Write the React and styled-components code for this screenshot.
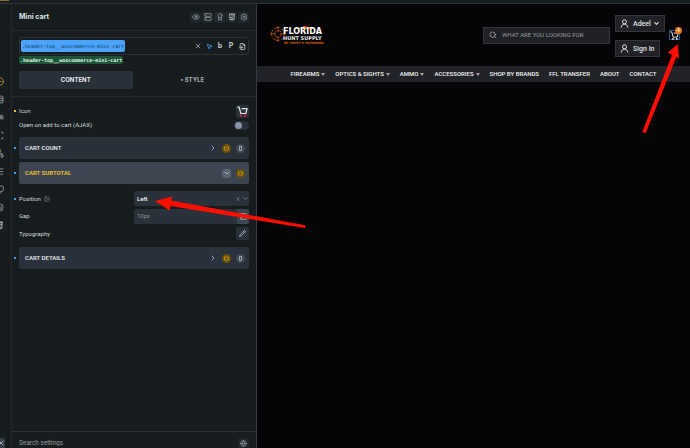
import React from "react";
import styled, { createGlobalStyle, css } from "styled-components";
import {
  Eye, Server, Award, Settings, X, MousePointer2, FileInput, ChevronRight, ChevronDown,
  Pencil, Monitor, Search, Globe, CirclePlus, Image, Table, CaseUpper, Network, List, Layers, Scan,
} from "lucide-react";
import { FaHtml5 } from "react-icons/fa";

const Global = createGlobalStyle`
  * { box-sizing: border-box; }
  body { margin: 0; background: #050507; font-family: Inter, sans-serif; }
  button, input, select { font: inherit; color: inherit; margin: 0; padding: 0; border: 0; background: none; }
  input, select { min-width: 0; outline: 0; }
  svg { display: block; flex: none; }
`;

const Page = styled.div`
  position: relative;
  display: flex;
  flex-direction: column;
  height: 100vh;
  overflow: hidden;
  color: #dfe3e6;
  font-size: 7px;
  line-height: 10px;
`;
const TopStrip = styled.div`
  flex: none;
  height: 4px;
  background: #181d1f;
  border-bottom: 1px solid #2c353c;
`;
const TopMark = styled.div`
  width: 9px;
  height: 1px;
  background: #8a701f;
`;
const Columns = styled.div`
  flex: 1;
  min-height: 0;
  display: flex;
`;

const Rail = styled.nav`
  flex: none;
  width: 12px;
  display: flex;
  flex-direction: column;
  justify-content: space-between;
  overflow: hidden;
  padding-top: 72px;
  background: #171c1e;
  border-right: 1px solid #22292d;
`;
const RailList = styled.div`
  display: flex;
  flex-direction: column;
  gap: 8px;
`;
const RailButton = styled.button`
  height: 10px;
  width: 4px;
  display: flex;
  justify-content: flex-end;
  align-items: center;
  overflow: hidden;
  color: ${(p) => (p.$active ? "#d9a925" : "#a4abb0")};
`;
const Collapse = styled.button`
  width: 5px;
  height: 10px;
  display: flex;
  justify-content: flex-end;
  align-items: center;
  overflow: hidden;
  background: #343e48;
  border-radius: 0 2px 0 0;
`;

const Panel = styled.aside`
  flex: none;
  width: 245px;
  display: flex;
  flex-direction: column;
  background: #171c1e;
  border-right: 1px solid #323b44;
`;
const PanelHead = styled.header`
  display: flex;
  align-items: center;
  justify-content: space-between;
  height: 27px;
  padding: 0 7px;
  border-bottom: 1px solid #252c31;
`;
const Title = styled.h1`
  margin: 0;
  font-size: 7px;
  line-height: 10px;
  font-weight: 700;
`;
const Tools = styled.div`
  display: flex;
  gap: 1px;
`;
const ToolButton = styled.button`
  display: grid;
  place-items: center;
  width: 11px;
  height: 11px;
  border-radius: 2px;
  background: #20272c;
  color: #a2a8ac;
`;
const ClassArea = styled.section`
  display: flex;
  flex-direction: column;
  align-items: stretch;
  padding: 6px 7px 7px;
  border-bottom: 1px solid #252c31;
`;
const ClassField = styled.div`
  display: flex;
  align-items: center;
  justify-content: space-between;
  height: 18px;
  padding: 0 1px;
  border: 1px solid #2a3239;
  border-radius: 3px;
`;
const ClassTag = styled.button`
  height: 12px;
  padding: 0 1px;
  border-radius: 2px;
  background: #4ba4fb;
  color: #12385f;
  font: 5px/12px "DejaVu Sans Mono", monospace;
`;
const Selector = styled.span`
  align-self: flex-start;
  margin-top: 1px;
  padding: 0 1px;
  border-radius: 2px;
  background: #1c5436;
  color: #e3f3e9;
  font: bold 5px/8px "DejaVu Sans Mono", monospace;
`;
const ClassTools = styled.div`
  display: flex;
  gap: 1px;
`;
const BareButton = styled.button`
  display: grid;
  place-items: center;
  width: 10px;
  height: 10px;
  font-size: 7px;
  line-height: 10px;
  font-weight: 700;
  color: ${(p) => (p.$blue ? "#4394df" : "#c3c7ca")};
`;
const Tabs = styled.div`
  display: flex;
  gap: 3px;
  margin-top: 7px;
`;
const Tab = styled.button`
  flex: 1;
  height: 18px;
  border-radius: 2px;
  font-size: 6px;
  font-weight: 700;
  background: ${(p) => (p.$active ? "#29313a" : "transparent")};
  color: ${(p) => (p.$active ? "#e8ebed" : "#a8aeb3")};
`;

const Controls = styled.section`
  flex: 1;
  display: flex;
  flex-direction: column;
  padding: 7px 7px 0 2px;
  font-family: Roboto, sans-serif;
`;
const Row = styled.div`
  display: flex;
  align-items: center;
  height: ${(p) => p.$h}px;
  margin-bottom: ${(p) => p.$gap || 0}px;
  font-size: 6px;
`;
const Dot = styled.span`
  flex: none;
  width: 2px;
  height: 2px;
  margin-right: 3px;
  background: ${(p) => p.$color || "transparent"};
`;
const Label = styled.label`
  flex: 1;
  display: flex;
  align-items: center;
  gap: 3px;
  color: #d3d7da;
`;
const SquareButton = styled.button`
  display: grid;
  place-items: center;
  width: 13px;
  height: 13px;
  border-radius: 2px;
  background: #29313a;
  color: #e9ecee;
`;
const Toggle = styled.input`
  appearance: none;
  width: 15px;
  height: 9px;
  border-radius: 5px;
  background: #29313a;
  &::before {
    content: "";
    display: block;
    width: 7px;
    height: 7px;
    margin: 1px;
    border-radius: 50%;
    background: #8794a6;
  }
  &:checked::before { margin-left: 7px; }
`;
const Group = styled.div`
  flex: 1;
  height: 22px;
  display: flex;
  align-items: center;
  gap: 5px;
  padding: 0 4px 0 6px;
  border-radius: 2px;
  background: ${(p) => (p.$open ? "#3d4650" : "#29313a")};
  color: ${(p) => (p.$open ? "#f2c13c" : "#e3e7ea")};
`;
const GroupName = styled.button`
  flex: 1;
  text-align: left;
  font-weight: 600;
`;
const Chevron = styled.button`
  display: grid;
  place-items: center;
  width: 9px;
  height: 9px;
  border-radius: 2px;
  color: #d5dade;
  ${(p) => p.$open && css`background: #566373;`}
`;
const Round = styled.button`
  display: grid;
  place-items: center;
  width: 9px;
  height: 9px;
  border-radius: 50%;
  background: ${(p) => (p.$gold ? "#6a500b" : "#414b56")};
  color: ${(p) => (p.$gold ? "#b58b22" : "#a3abb3")};
`;
const Field = styled.div`
  width: 115px;
  height: 15px;
  display: flex;
  align-items: center;
  overflow: hidden;
  border-radius: 2px;
  background: #29313a;
  padding-left: 3px;
`;
const Picker = styled.select`
  flex: 1;
  appearance: none;
  font-weight: 600;
  color: #eef0f2;
`;
const TextInput = styled.input`
  flex: 1;
  color: #8e969d;
`;
const FieldIcon = styled.button`
  width: 7px;
  color: #929aa1;
`;
const UnitButton = styled.button`
  display: grid;
  place-items: center;
  width: 12px;
  height: 15px;
  background: #3d4650;
  color: #cfd4d8;
`;
const PanelFoot = styled.footer`
  display: flex;
  align-items: center;
  height: 17px;
  padding: 6px 7px 0;
  border-top: 1px solid #2a3136;
`;
const SettingsSearch = styled.input`
  flex: 1;
  font-size: 6px;
  &::placeholder { color: #9da3a7; }
`;

const Site = styled.main`
  flex: 1;
  min-width: 0;
  font-family: Roboto, sans-serif;
`;
const SiteHead = styled.header`
  display: flex;
  align-items: center;
  height: 62px;
  padding: 0 10px 0 13px;
`;
const LogoLink = styled.a`
  margin-right: auto;
`;
const SearchBox = styled.label`
  display: flex;
  align-items: center;
  gap: 5px;
  width: 127px;
  height: 17px;
  padding: 0 5px;
  margin-right: 5px;
  border: 1px solid #34353b;
  background: #202126;
  color: #b5b6ba;
`;
const SearchInput = styled.input`
  flex: 1;
  font-size: 6px;
  &::placeholder { color: #9a9b9f; }
`;
const Accounts = styled.div`
  display: flex;
  flex-direction: column;
  align-items: flex-start;
  gap: 8px;
  width: 54px;
  padding-top: 2px;
`;
const Account = styled.button`
  display: flex;
  align-items: center;
  gap: ${(p) => (p.$wide ? 2 : 0)}px;
  height: 17px;
  padding: 0 4px;
  border: 1px solid #34353b;
  background: #202126;
  color: #e2e2e4;
  font: 500 7px/10px Roboto, sans-serif;
  & > svg:first-child { margin-right: ${(p) => (p.$wide ? 2 : 4)}px; }
`;
const CartButton = styled.button`
  position: relative;
  width: 11px;
  height: 10px;
  display: grid;
  place-items: center;
  border: 1px solid #1c5a8c;
  color: #eeeeee;
`;
const Badge = styled.span`
  position: absolute;
  right: -3px;
  top: -4px;
  width: 7px;
  height: 7px;
  border-radius: 50%;
  background: #f47416;
  color: #fff;
  font-size: 5px;
  line-height: 7px;
  text-align: center;
`;
const Menu = styled.nav`
  display: flex;
  justify-content: center;
  align-items: center;
  gap: 10px;
  height: 16px;
  background: #222328;
`;
const MenuLink = styled.a`
  display: flex;
  align-items: center;
  gap: 2px;
  color: #f4f4f6;
  font-size: 6px;
  font-weight: 500;
  text-decoration: none;
  white-space: nowrap;
`;
const Arrow = styled.svg`
  position: absolute;
  left: ${(p) => p.$x}px;
  top: ${(p) => p.$y}px;
  pointer-events: none;
`;

const Cart = ({ size, wheels }) => (
  <svg width={size} height={size} viewBox="0 0 12 12" fill="none" stroke="currentColor" strokeWidth="1.3">
    <path d="M0.5 1.2H2.3L4.2 8.2H9.6L11 2.8H5" strokeLinejoin="round" />
    <path d="M4 9.4V11.6M9 9.4V11.6" stroke={wheels} strokeWidth="2" />
  </svg>
);
const Card = () => (
  <svg width="5" height="5" viewBox="0 0 5 5" fill="none" stroke="currentColor">
    <path d="M.5 1H4.5V4H.5Z" />
  </svg>
);
const Sheet = () => (
  <svg width="5" height="5" viewBox="0 0 5 5" fill="none" stroke="currentColor">
    <path d="M1.5 .5H3.5V4.5H1.5Z" />
  </svg>
);
const Caret = () => (
  <svg width="4" height="3" viewBox="0 0 4 3"><path d="M0 0H4L2 3Z" fill="#a3a3a8" /></svg>
);
const Person = () => (
  <svg width="9" height="9" viewBox="0 0 9 9" fill="none" stroke="currentColor">
    <circle cx="4.5" cy="2.8" r="2" /><path d="M1.2 8.5C1.4 6.4 2.6 5.3 4.5 5.3S7.6 6.4 7.8 8.5" />
  </svg>
);

const Logo = () => (
  <svg width="56" height="22" viewBox="0 0 56 22" role="img" aria-label="Florida Hunt Supply">
    <g fill="none" stroke="#c65315" strokeWidth=".8">
      <circle cx="8" cy="10" r="6.5" strokeDasharray="7 1.5" />
      <circle cx="8" cy="10" r="3.5" strokeDasharray="4 1.2" />
      <path d="M0 10H6M10 10H16M8 2V8M8 12V18" />
    </g>
    <path d="M25 5L28 3.2L31 4L34 1.8L38 3L42 2.7L45 5Z" fill="#df5e18" />
    <text x="13" y="10" fontFamily="DejaVu Sans" fontWeight="700" fontSize="8" fill="#fff">FLORIDA</text>
    <text x="13" y="16" fontFamily="DejaVu Sans" fontWeight="700" fontSize="5" fill="#e8e8e8">HUNT SUPPLY</text>
    <text x="14" y="20" fontFamily="DejaVu Sans" fontWeight="700" fontSize="3" fill="#df5e18">BY COVEY’S OUTDOORS</text>
  </svg>
);

const railIcons = [
  ["Add", CirclePlus], ["Layout", Table], ["Text", CaseUpper], ["Templates", Scan], ["Structure", Network],
  ["List", List], ["Pages", Monitor], ["Layers", Layers], ["Code", FaHtml5],
];
const tools = [["Preview", Eye], ["States", Server], ["Interactions", Award], ["HTML", FaHtml5], ["Settings", Settings]];
const menu = [
  ["FIREARMS", true], ["OPTICS & SIGHTS", true], ["AMMO", true], ["ACCESSORIES", true],
  ["SHOP BY BRANDS"], ["FFL TRANSFER"], ["ABOUT"], ["CONTACT"],
];
const BLUE = "#48a0f5";

function GroupRow({ name, open, gap }) {
  return (
    <Row $h={22} $gap={gap}>
      <Dot $color={BLUE} />
      <Group $open={open}>
        <GroupName>{name}</GroupName>
        <Chevron $open={open} aria-label={`Toggle ${name}`}>
          {open ? <ChevronDown size={8} /> : <ChevronRight size={8} />}
        </Chevron>
        <Round $gold aria-label="Style"><Card /></Round>
        {!open && <Round aria-label="Copy"><Sheet /></Round>}
      </Group>
    </Row>
  );
}

export default function App() {
  return (
    <Page>
      <Global />
      <TopStrip><TopMark /></TopStrip>
      <Columns>
        <Rail>
          <RailList>
            {railIcons.map(([name, Icon], i) => (
              <RailButton key={name} $active={i === 0} aria-label={name}><Icon size={9} /></RailButton>
            ))}
          </RailList>
          <Collapse aria-label="Collapse"><X size={8} /></Collapse>
        </Rail>

        <Panel>
          <PanelHead>
            <Title>Mini cart</Title>
            <Tools>
              {tools.map(([name, Icon]) => (
                <ToolButton key={name} aria-label={name}><Icon size={8} /></ToolButton>
              ))}
            </Tools>
          </PanelHead>

          <ClassArea>
            <ClassField>
              <ClassTag>.header-top__woocommerce-mini-cart</ClassTag>
              <ClassTools>
                <BareButton aria-label="Clear"><X size={8} /></BareButton>
                <BareButton $blue aria-label="Select"><MousePointer2 size={7} strokeWidth={3} /></BareButton>
                <BareButton>b</BareButton>
                <BareButton>P</BareButton>
                <BareButton aria-label="Paste"><FileInput size={7} strokeWidth={3} /></BareButton>
              </ClassTools>
            </ClassField>
            <Selector>.header-top__woocommerce-mini-cart</Selector>
            <Tabs role="tablist">
              <Tab role="tab" aria-selected="true" $active>CONTENT</Tab>
              <Tab role="tab" aria-selected="false">• STYLE</Tab>
            </Tabs>
          </ClassArea>

          <Controls>
            <Row $h={14}>
              <Dot $color="#f2c13c" />
              <Label htmlFor="icon">Icon</Label>
              <SquareButton id="icon"><Cart size={11} wheels="#e0194f" /></SquareButton>
            </Row>
            <Row $h={14} $gap={5}>
              <Dot />
              <Label htmlFor="ajax">Open on add to cart (AJAX)</Label>
              <Toggle id="ajax" type="checkbox" />
            </Row>
            <GroupRow name="CART COUNT" gap={3} />
            <GroupRow name="CART SUBTOTAL" open gap={6} />
            <Row $h={17}>
              <Dot $color={BLUE} />
              <Label htmlFor="position">Position <Image size={6} color="#7d858c" /></Label>
              <Field>
                <Picker id="position" defaultValue="Left"><option>Left</option><option>Right</option></Picker>
                <FieldIcon aria-label="Clear position"><X size={6} /></FieldIcon>
                <FieldIcon aria-label="Open position"><ChevronDown size={7} /></FieldIcon>
              </Field>
            </Row>
            <Row $h={18}>
              <Dot />
              <Label htmlFor="gap">Gap</Label>
              <Field>
                <TextInput id="gap" defaultValue="10px" />
                <UnitButton aria-label="Gap variable"><Server size={7} /></UnitButton>
              </Field>
            </Row>
            <Row $h={17} $gap={5}>
              <Dot />
              <Label htmlFor="type">Typography</Label>
              <SquareButton id="type"><Pencil size={7} /></SquareButton>
            </Row>
            <GroupRow name="CART DETAILS" />
          </Controls>

          <PanelFoot>
            <SettingsSearch placeholder="Search settings" aria-label="Search settings" />
            <ToolButton aria-label="Global settings"><Globe size={7} /></ToolButton>
          </PanelFoot>
        </Panel>

        <Site>
          <SiteHead>
            <LogoLink href="#home"><Logo /></LogoLink>
            <SearchBox>
              <Search size={8} />
              <SearchInput placeholder="WHAT ARE YOU LOOKING FOR" aria-label="Search products" />
            </SearchBox>
            <Accounts>
              <Account $wide><Person />Adeel<ChevronDown size={7} strokeWidth={4} /></Account>
              <Account><Person />Sign In</Account>
            </Accounts>
            <CartButton aria-label="Cart"><Cart size={9} wheels="#eeeeee" /><Badge>4</Badge></CartButton>
          </SiteHead>
          <Menu>
            {menu.map(([name, sub]) => (
              <MenuLink key={name} href="#menu">{name}{sub && <Caret />}</MenuLink>
            ))}
          </Menu>
        </Site>
      </Columns>

      <Arrow $x={154} $y={195} width="153" height="35" viewBox="154 195 153 35">
        <path d="M155 201L172 196.5L171.3 200.5L305 225.3Q306.3 227 304.7 228L170.5 206L169.7 210.5Z" fill="#fe0d02" />
      </Arrow>
      <Arrow $x={640} $y={43} width="42" height="92" viewBox="640 43 42 92">
        <path d="M677.7 44L667.7 52.7L672 54.7L642.3 132L645.7 133.3L676.3 57L679 58.5Z" fill="#fe0d02" />
      </Arrow>
    </Page>
  );
}
